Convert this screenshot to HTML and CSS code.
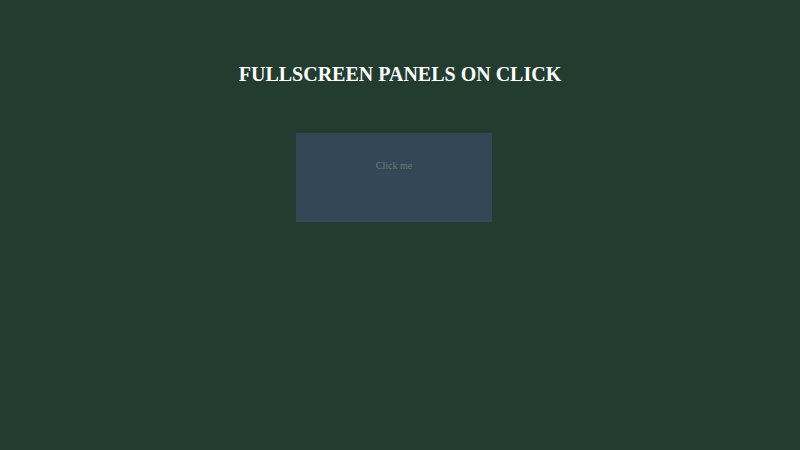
FILE: index.html
```
<!DOCTYPE html>
<html lang="en">
<head>
  <meta charset="UTF-8">
  <meta name="viewport" content="width=device-width, initial-scale=1.0">
  <title>Fullscreen Panels</title>
  <link rel="stylesheet" href="styles.css">
</head>
<body>
  <h1 class="title">Fullscreen panels on click</h1>
  <div class="panels">
    <button class="panel" type="button">Click me</button>
  </div>

  <script>
    const panel = document.querySelector(".panel");

    panel.addEventListener("click", () => {
      panel.classList.toggle("fullscreen");
    });
  </script>
</body>
</html>
```
FILE: styles.css
```
body {
  margin: 0;
  background-color: #223c2f;
  font-family: "Liberation Serif", serif;
}

.title {
  margin: 62px 0 46px;
  font-size: 20px;
  line-height: 25px;
  text-align: center;
  text-transform: uppercase;
  color: white;
}

.panels {
  padding: 0 38.5% 0 37%;
}

.panel {
  display: block;
  width: 100%;
  padding: 27px 0 50px;
  border: none;
  background-color: #324857;
  color: #6f7a72;
  font-family: inherit;
  font-size: 10px;
  line-height: 12px;
  cursor: pointer;
}

.panel.fullscreen {
  position: fixed;
  inset: 0;
  height: 100%;
}
```
